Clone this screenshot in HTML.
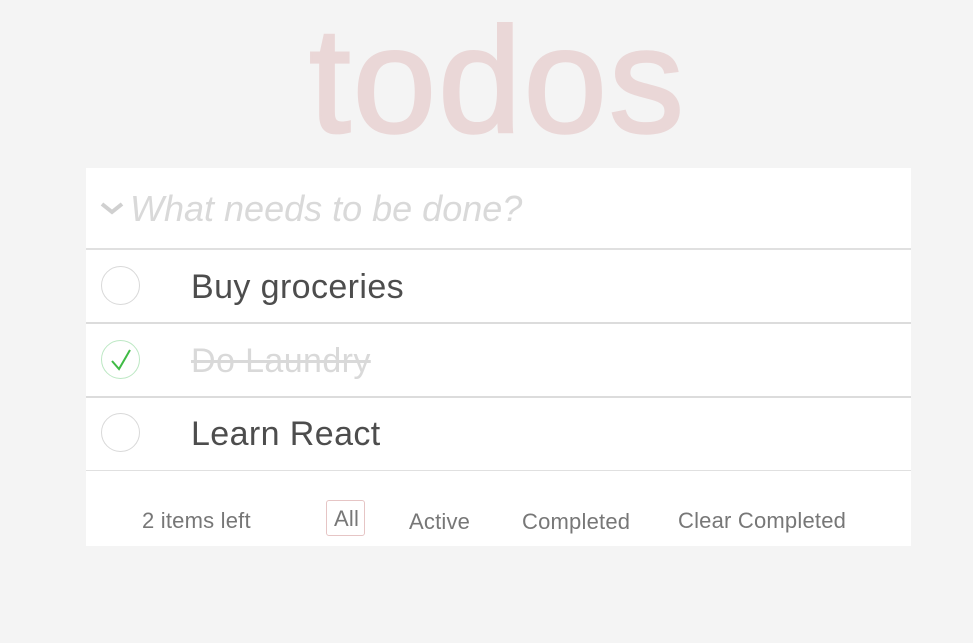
<!DOCTYPE html>
<html><head><style>
body{margin:0;width:973px;height:643px;background:#f4f4f4;font-family:"Liberation Sans",sans-serif;position:relative;overflow:hidden}
.a{position:absolute;white-space:nowrap}
#t{left:0;width:995px;text-align:center;top:-6px;font-size:150px;color:#ead7d7;font-weight:normal;-webkit-text-stroke:2.5px #ead7d7;letter-spacing:2px}
#p{position:absolute;left:86px;top:168px;width:825px;height:378px;background:#fff}
.l{position:absolute;left:86px;width:825px;height:1px;background:#e0e0e0}
.c{position:absolute;left:101px;width:37px;height:37px;border:1px solid #d9d9d9;border-radius:50%}
.it{left:191px;font-size:34px;color:#4d4d4d;letter-spacing:0.4px}
.f{font-size:22px;color:#777;top:508px;letter-spacing:0.2px}
</style></head><body>
<div class="a" id="t">todos</div>
<div id="p"></div>
<svg class="a" style="left:100px;top:200px" width="26" height="16"><path d="M2 4 L12 12 L22 4" stroke="#d0d0d0" stroke-width="4" fill="none"/></svg>
<div class="a" style="left:130px;top:188px;font-size:36px;font-style:italic;color:#d9d9d9">What needs to be done?</div>
<div class="l" style="top:248px;height:2px"></div>
<div class="c" style="top:266px"></div>
<div class="a it" style="top:268px">Buy groceries</div>
<div class="l" style="top:322px;height:2px;background:#dcdcdc"></div>
<div class="c" style="top:340px;border-color:#bde8c4"></div>
<svg class="a" style="left:108px;top:345px" width="26" height="28"><path d="M4 16 L11 24 L22 5" stroke="#3fbb45" stroke-width="2" fill="none"/></svg>
<div class="a it" style="top:342px;color:#d9d9d9;text-decoration:line-through">Do Laundry</div>
<div class="l" style="top:396px;height:2px;background:#dcdcdc"></div>
<div class="c" style="top:413px"></div>
<div class="a it" style="top:415px">Learn React</div>
<div class="l" style="top:470px"></div>
<div class="a f" style="left:142px">2 items left</div>
<div class="a f" style="left:326px;top:500px;border:1px solid #e6c5c5;border-radius:3px;padding:5px 5px 3px 7px">All</div>
<div class="a f" style="left:409px;top:509px">Active</div>
<div class="a f" style="left:522px;top:509px">Completed</div>
<div class="a f" style="left:678px">Clear Completed</div>
</body></html>
